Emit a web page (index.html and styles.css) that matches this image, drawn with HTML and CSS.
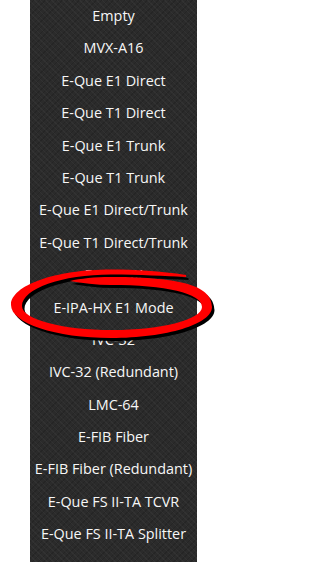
FILE: index.html
```html
<!DOCTYPE html>
<html lang="en">
<head>
<meta charset="utf-8">
<title>Card type menu</title>
<link rel="stylesheet" href="styles.css">
</head>
<body>
<div class="page">
  <ul class="menu">
    <li class="item">Empty</li>
    <li class="item">MVX-A16</li>
    <li class="item">E-Que E1 Direct</li>
    <li class="item">E-Que T1 Direct</li>
    <li class="item">E-Que E1 Trunk</li>
    <li class="item">E-Que T1 Trunk</li>
    <li class="item">E-Que E1 Direct/Trunk</li>
    <li class="item">E-Que T1 Direct/Trunk</li>
    <li class="item">E-IPA-HX</li>
    <li class="item">E-IPA-HX E1 Mode</li>
    <li class="item">IVC-32</li>
    <li class="item">IVC-32 (Redundant)</li>
    <li class="item">LMC-64</li>
    <li class="item">E-FIB Fiber</li>
    <li class="item">E-FIB Fiber (Redundant)</li>
    <li class="item">E-Que FS II-TA TCVR</li>
    <li class="item">E-Que FS II-TA Splitter</li>
  </ul>
  <svg class="annotation" viewBox="0 0 220 562" width="220" height="562" aria-hidden="true">
    <defs>
      <path id="loop" d="M186,275
        C160,271 135,269.5 111,269.5
        C55.2,269.5 11,285.4 11,305
        C11,323.2 55.2,338 111,338
        C166.8,338 212,324.1 212,307
        C212,287 185,277 111,277
        C95,277 80,278.5 70,281
        C82,283 96,285 111,285
        C165,285 202,293 202,307
        C202,319.4 161.7,330 112,330
        C62.3,330 22,319.4 22,306
        C22,288.6 61.8,274.5 111,274.5
        C140,274.5 165,276 186,277 Z"/>
    </defs>
    <use href="#loop" class="loop-shadow" transform="translate(2.5 3)"/>
    <use href="#loop" class="loop-red"/>
  </svg>
</div>
</body>
</html>
```

FILE: styles.css
```css
html, body {
  margin: 0;
  padding: 0;
  background: #ffffff;
}

.page {
  position: relative;
  width: 220px;
  height: 562px;
  overflow: hidden;
}

.menu {
  margin: 0 0 0 30px;
  padding: 0;
  list-style: none;
  width: 167px;
  height: 562px;
  background-color: #2b2b2b;
  background-image:
    repeating-linear-gradient(45deg, rgba(255, 255, 255, 0.035) 0 1px, transparent 1px 4px),
    repeating-linear-gradient(-45deg, rgba(0, 0, 0, 0.14) 0 1px, transparent 1px 4px);
}

.item {
  height: 32.4px;
  line-height: 32.4px;
  text-align: center;
  white-space: nowrap;
  font-family: "Open Sans", "Noto Sans", sans-serif;
  font-size: 14.4px;
  color: #f7f7f7;
}

.annotation {
  position: absolute;
  left: 0;
  top: 0;
  pointer-events: none;
}

.loop-shadow {
  fill: #000000;
}

.loop-red {
  fill: #ff0000;
}
```
